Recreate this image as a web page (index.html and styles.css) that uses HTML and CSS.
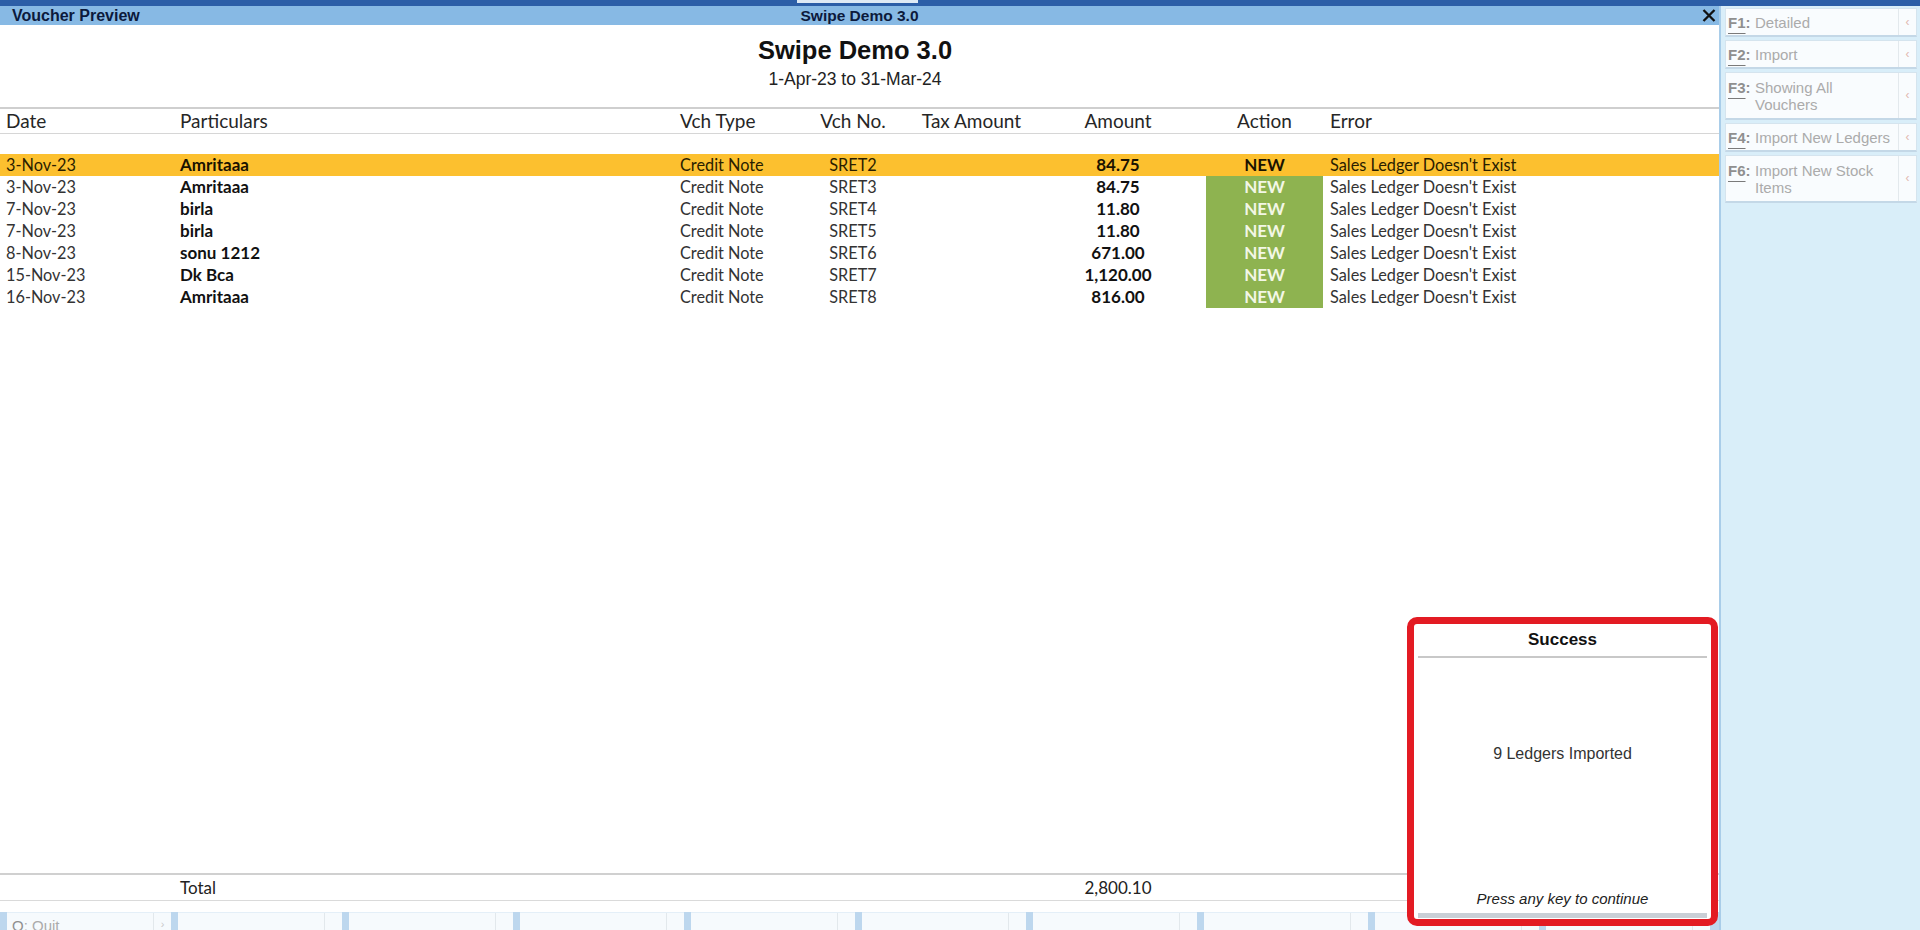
FILE: index.html
```html
<!DOCTYPE html>
<html>
<head>
<meta charset="utf-8">
<title>Voucher Preview</title>
<link rel="stylesheet" href="styles.css">
</head>
<body>
<div class="topstrip"><div class="tab"></div></div>
<div class="frame">
  <div class="main">
    <div class="titlebar">
      <div class="tb-left">Voucher Preview</div>
      <div class="tb-center">Swipe Demo 3.0</div>
      <div class="tb-right">
        <svg class="close" width="14" height="13" viewBox="0 0 14 13"><path d="M1.5 1 L12.5 12 M12.5 1 L1.5 12" stroke="#111" stroke-width="2.3" fill="none"/></svg>
      </div>
    </div>
    <div class="content">
      <div class="rep-title">Swipe Demo 3.0</div>
      <div class="rep-sub">1-Apr-23 to 31-Mar-24</div>
      <div class="thead grid">
        <div class="c-date">Date</div>
        <div class="c-par">Particulars</div>
        <div class="c-type">Vch Type</div>
        <div class="c-no">Vch No.</div>
        <div class="c-tax">Tax Amount</div>
        <div class="c-amt">Amount</div>
        <div class="c-act">Action</div>
        <div class="c-err">Error</div>
      </div>
      <div class="rows">
        <div class="row grid sel">
          <div class="c-date">3-Nov-23</div><div class="c-par">Amritaaa</div><div class="c-type">Credit Note</div><div class="c-no">SRET2</div><div class="c-tax"></div><div class="c-amt">84.75</div><div class="c-act">NEW</div><div class="c-err">Sales Ledger Doesn't Exist</div>
        </div>
        <div class="row grid">
          <div class="c-date">3-Nov-23</div><div class="c-par">Amritaaa</div><div class="c-type">Credit Note</div><div class="c-no">SRET3</div><div class="c-tax"></div><div class="c-amt">84.75</div><div class="c-act">NEW</div><div class="c-err">Sales Ledger Doesn't Exist</div>
        </div>
        <div class="row grid">
          <div class="c-date">7-Nov-23</div><div class="c-par">birla</div><div class="c-type">Credit Note</div><div class="c-no">SRET4</div><div class="c-tax"></div><div class="c-amt">11.80</div><div class="c-act">NEW</div><div class="c-err">Sales Ledger Doesn't Exist</div>
        </div>
        <div class="row grid">
          <div class="c-date">7-Nov-23</div><div class="c-par">birla</div><div class="c-type">Credit Note</div><div class="c-no">SRET5</div><div class="c-tax"></div><div class="c-amt">11.80</div><div class="c-act">NEW</div><div class="c-err">Sales Ledger Doesn't Exist</div>
        </div>
        <div class="row grid">
          <div class="c-date">8-Nov-23</div><div class="c-par">sonu 1212</div><div class="c-type">Credit Note</div><div class="c-no">SRET6</div><div class="c-tax"></div><div class="c-amt">671.00</div><div class="c-act">NEW</div><div class="c-err">Sales Ledger Doesn't Exist</div>
        </div>
        <div class="row grid">
          <div class="c-date">15-Nov-23</div><div class="c-par">Dk Bca</div><div class="c-type">Credit Note</div><div class="c-no">SRET7</div><div class="c-tax"></div><div class="c-amt">1,120.00</div><div class="c-act">NEW</div><div class="c-err">Sales Ledger Doesn't Exist</div>
        </div>
        <div class="row grid">
          <div class="c-date">16-Nov-23</div><div class="c-par">Amritaaa</div><div class="c-type">Credit Note</div><div class="c-no">SRET8</div><div class="c-tax"></div><div class="c-amt">816.00</div><div class="c-act">NEW</div><div class="c-err">Sales Ledger Doesn't Exist</div>
        </div>
      </div>
      <div class="fill"></div>
      <div class="total grid">
        <div class="c-date"></div><div class="c-totlabel">Total</div><div></div><div></div><div></div><div class="c-totamt">2,800.10</div><div></div><div></div>
      </div>
    </div>
    <div class="bbar">
      <div class="bbtn"><div class="t"><span class="bk">Q</span>: Quit</div><div class="a">›</div></div>
      <div class="bbtn"><div class="t"></div><div class="a"></div></div>
      <div class="bbtn"><div class="t"></div><div class="a"></div></div>
      <div class="bbtn"><div class="t"></div><div class="a"></div></div>
      <div class="bbtn"><div class="t"></div><div class="a"></div></div>
      <div class="bbtn"><div class="t"></div><div class="a"></div></div>
      <div class="bbtn"><div class="t"></div><div class="a"></div></div>
      <div class="bbtn"><div class="t"></div><div class="a"></div></div>
      <div class="bbtn"><div class="t"></div><div class="a"></div></div>
      <div class="bbtn"><div class="t"></div><div class="a"></div></div>
    </div>
  </div>
  <div class="side">
    <div class="fbtn h1"><div class="txt"><span class="key"><u>F1</u>:</span><span class="lab">Detailed</span></div><div class="arr">‹</div></div>
    <div class="fbtn h1"><div class="txt"><span class="key"><u>F2</u>:</span><span class="lab">Import</span></div><div class="arr">‹</div></div>
    <div class="fbtn h2"><div class="txt"><span class="key"><u>F3</u>:</span><span class="lab">Showing All<br>Vouchers</span></div><div class="arr">‹</div></div>
    <div class="fbtn h1"><div class="txt"><span class="key"><u>F4</u>:</span><span class="lab">Import New Ledgers</span></div><div class="arr">‹</div></div>
    <div class="fbtn h2"><div class="txt"><span class="key"><u>F6</u>:</span><span class="lab">Import New Stock<br>Items</span></div><div class="arr">‹</div></div>
  </div>
  <div class="dialog">
    <div class="dlg-head">Success</div>
    <div class="dlg-body">9 Ledgers Imported</div>
    <div class="dlg-foot">Press any key to continue</div>
    <div class="dlg-bar"></div>
  </div>
</div>
</body>
</html>
```
FILE: styles.css
```css
html, body {
  margin: 0;
  padding: 0;
}
body {
  width: 1920px;
  height: 930px;
  overflow: hidden;
  background: #ffffff;
  font-family: "Liberation Sans", Arial, sans-serif;
}
.topstrip {
  height: 6px;
  background: #2c5ea7;
}
.tab {
  margin-left: 797px;
  width: 121px;
  height: 3px;
  background: #dfeaf5;
}
.frame {
  display: flex;
  height: 924px;
  position: relative;
}
.main {
  width: 1719px;
  flex: none;
  display: flex;
  flex-direction: column;
}
.titlebar {
  height: 19px;
  background: #87b9e4;
  display: grid;
  grid-template-columns: 1fr auto 1fr;
  align-items: center;
  color: #0c1a3c;
  font-weight: bold;
}
.tb-left {
  padding-left: 12px;
  font-size: 16px;
  line-height: 19px;
}
.tb-center {
  font-size: 15.5px;
  line-height: 19px;
}
.tb-right {
  display: flex;
  justify-content: flex-end;
  padding-right: 3px;
}
.close {
  display: block;
}
.content {
  flex: 1;
  display: flex;
  flex-direction: column;
  background: #ffffff;
}
.rep-title {
  text-align: center;
  font-size: 25.5px;
  font-weight: bold;
  line-height: 30px;
  margin-top: 10px;
  padding-right: 9px;
  color: #111111;
}
.rep-sub {
  text-align: center;
  font-size: 17.5px;
  line-height: 20px;
  margin-top: 4px;
  padding-right: 9px;
  color: #222222;
}
.grid {
  display: grid;
  grid-template-columns: 180px 500px 113px 120px 117px 176px 117px 1fr;
}
.c-date { padding-left: 6px; }
.c-no, .c-tax, .c-amt, .c-act { text-align: center; }
.c-err { padding-left: 7px; white-space: nowrap; }
.thead {
  margin-top: 18px;
  border-top: 2px solid #cfcfcf;
  border-bottom: 1px solid #d6d6d6;
  height: 24px;
  line-height: 24px;
  font-family: Lato, "Open Sans", sans-serif;
  font-size: 19px;
  color: #262626;
}
.rows {
  margin-top: 20px;
}
.row {
  height: 22px;
  line-height: 22px;
  font-family: Lato, "Open Sans", sans-serif;
  font-size: 16.3px;
  color: #333333;
}
.row .c-par, .row .c-amt, .row .c-act {
  font-weight: bold;
  font-size: 17px;
  color: #111111;
}
.row .c-act {
  background: #8eb350;
  color: #f3f7e6;
}
.row.sel {
  background: #fcc02f;
  color: #2a1d00;
}
.row.sel .c-act {
  background: transparent;
  color: #1a1200;
}
.row.sel .c-par, .row.sel .c-amt {
  color: #1a1200;
}
.fill {
  flex: 1;
}
.total {
  border-top: 2px solid #d0d0d0;
  border-bottom: 1px solid #dadada;
  height: 25px;
  line-height: 25px;
  margin-bottom: 11px;
  font-family: Lato, "Open Sans", sans-serif;
  font-size: 17px;
  color: #222222;
}
.c-totamt { text-align: center; }
.bbar {
  height: 18px;
  background: #bdd7ee;
  display: flex;
  gap: 7px;
  padding-left: 7px;
  overflow: hidden;
}
.bbtn {
  width: 164px;
  flex: none;
  display: flex;
  background: #f6fafd;
  border-top: 1px solid #e4eff8;
  box-sizing: border-box;
}
.bbtn .t {
  flex: 1;
  padding: 4px 0 0 5px;
  font-size: 15px;
  line-height: 17px;
  color: #ababab;
}
.bbtn .bk {
  color: #8f8f8f;
}
.bbtn .a {
  width: 17px;
  border-left: 1px solid #e2e8ec;
  font-size: 11px;
  color: #c9c9c9;
  text-align: center;
  line-height: 22px;
}
.side {
  flex: 1;
  background: #d9eef9;
  border-left: 2px solid #a9cde9;
  padding: 2px 3px 0 4px;
  display: flex;
  flex-direction: column;
  gap: 3px;
}
.fbtn {
  display: flex;
  box-sizing: border-box;
  background: #f9fcfe;
  border: 1px solid #d5e4ee;
  border-bottom: 2px solid #c4d8e7;
  color: #ababab;
  font-size: 15px;
  line-height: 17px;
}
.fbtn.h1 { height: 29px; }
.fbtn.h2 { height: 48px; }
.fbtn .txt {
  flex: 1;
  display: flex;
  align-items: center;
  padding-left: 2px;
}
.fbtn .key {
  width: 27px;
  flex: none;
  align-self: center;
  color: #8f8f8f;
  font-weight: bold;
}
.fbtn.h2 .key {
  align-self: flex-start;
  margin-top: 6px;
}
.fbtn .key u {
  text-decoration-color: #7a7a7a;
  text-underline-offset: 5px;
  text-decoration-thickness: 1px;
}
.fbtn .arr {
  width: 17px;
  flex: none;
  border-left: 1px solid #e3e9ed;
  display: flex;
  align-items: center;
  justify-content: center;
  font-size: 12px;
  color: #e2b8ae;
}
.dialog {
  position: absolute;
  left: 1407px;
  top: 611px;
  width: 311px;
  height: 309px;
  box-sizing: border-box;
  border: 7px solid #e31b23;
  border-radius: 10px;
  background: #ffffff;
  display: flex;
  flex-direction: column;
  padding: 0 4px;
}
.dlg-head {
  height: 32px;
  border-bottom: 2px solid #c8c8c8;
  text-align: center;
  font-weight: bold;
  font-size: 17px;
  line-height: 32px;
  color: #111111;
}
.dlg-body {
  flex: 1;
  text-align: center;
  padding-top: 86px;
  font-size: 16px;
  line-height: 20px;
  color: #333333;
}
.dlg-foot {
  text-align: center;
  font-style: italic;
  font-size: 15px;
  line-height: 20px;
  color: #222222;
}
.dlg-bar {
  height: 5px;
  background: #c9cfd6;
  margin-top: 4px;
  margin-bottom: 1px;
}
```
